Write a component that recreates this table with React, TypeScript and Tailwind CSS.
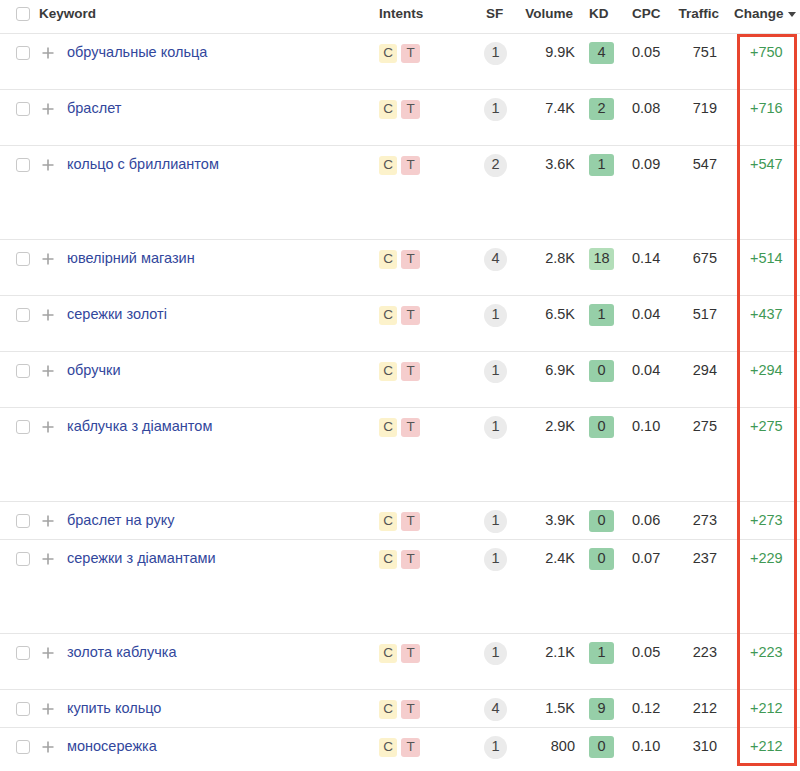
import React from "react";

type Row = {
  kw: string;
  sf: number;
  vol: string;
  kd: number;
  cpc: string;
  traffic: number;
  change: string;
  h: number;
};

const rows: Row[] = [
  { kw: "обручальные кольца", sf: 1, vol: "9.9K", kd: 4, cpc: "0.05", traffic: 751, change: "+750", h: 56 },
  { kw: "браслет", sf: 1, vol: "7.4K", kd: 2, cpc: "0.08", traffic: 719, change: "+716", h: 56 },
  { kw: "кольцо с бриллиантом", sf: 2, vol: "3.6K", kd: 1, cpc: "0.09", traffic: 547, change: "+547", h: 94 },
  { kw: "ювелірний магазин", sf: 4, vol: "2.8K", kd: 18, cpc: "0.14", traffic: 675, change: "+514", h: 56 },
  { kw: "сережки золоті", sf: 1, vol: "6.5K", kd: 1, cpc: "0.04", traffic: 517, change: "+437", h: 56 },
  { kw: "обручки", sf: 1, vol: "6.9K", kd: 0, cpc: "0.04", traffic: 294, change: "+294", h: 56 },
  { kw: "каблучка з діамантом", sf: 1, vol: "2.9K", kd: 0, cpc: "0.10", traffic: 275, change: "+275", h: 94 },
  { kw: "браслет на руку", sf: 1, vol: "3.9K", kd: 0, cpc: "0.06", traffic: 273, change: "+273", h: 38 },
  { kw: "сережки з діамантами", sf: 1, vol: "2.4K", kd: 0, cpc: "0.07", traffic: 237, change: "+229", h: 94 },
  { kw: "золота каблучка", sf: 1, vol: "2.1K", kd: 1, cpc: "0.05", traffic: 223, change: "+223", h: 56 },
  { kw: "купить кольцо", sf: 4, vol: "1.5K", kd: 9, cpc: "0.12", traffic: 212, change: "+212", h: 38 },
  { kw: "моносережка", sf: 1, vol: "800", kd: 0, cpc: "0.10", traffic: 310, change: "+212", h: 38 },
];

function Checkbox() {
  return <div className="w-[14px] h-[14px] shrink-0 rounded-[3px] border border-[#c9c9c9] bg-white" />;
}

function Plus() {
  return (
    <svg width="12" height="12" viewBox="0 0 12 12" className="shrink-0">
      <path d="M6 0.5V11.5M0.5 6H11.5" stroke="#a3a3a3" strokeWidth="1.6" />
    </svg>
  );
}

export default function App() {
  return (
    <div
      className="relative w-[800px] h-[771px] bg-white text-[#333] overflow-hidden"
      style={{ fontFamily: '"Liberation Sans", Arial, sans-serif' }}
    >
      {/* header */}
      <div className="flex items-start h-[33px] pt-[5px] text-[13.5px] font-bold text-[#3a3a3a] leading-[18px]">
        <div className="w-[379px] h-[18px] flex items-center pl-4">
          <Checkbox />
          <span className="ml-[9px]">Keyword</span>
        </div>
        <div className="w-[107px] h-[18px]">Intents</div>
        <div className="w-[21px] h-[18px]">SF</div>
        <div className="w-[66px] h-[18px] text-right">Volume</div>
        <div className="w-[59px] h-[18px] pl-[16px]">KD</div>
        <div className="w-[45px] h-[18px]">CPC</div>
        <div className="w-[42px] h-[18px] text-right">Traffic</div>
        <div className="flex-1 h-[18px] pl-[15px] flex items-center gap-[4px]">
          <span>Change</span>
          <svg width="8" height="5" viewBox="0 0 8 5">
            <path d="M0 0H8L4 5Z" fill="#444" />
          </svg>
        </div>
      </div>

      {/* rows */}
      {rows.map((r, i) => (
        <div
          key={i}
          className="flex items-start border-t border-[#e6e6e6] pt-[8px] text-[14.5px]"
          style={{ height: r.h }}
        >
          <div className="w-[379px] h-[22px] flex items-center pl-4">
            <Checkbox />
            <div className="ml-[12px]">
              <Plus />
            </div>
            <span className="ml-[13px] text-[#32479c]">{r.kw}</span>
          </div>
          <div className="w-[105px] h-[22px] flex items-center gap-[4px] text-[13.5px] text-[#555]">
            <span className="w-[18px] h-[19px] rounded-[3px] bg-[#fcf2cb] flex items-center justify-center">C</span>
            <span className="w-[19px] h-[19px] rounded-[3px] bg-[#f5cdcd] flex items-center justify-center">T</span>
          </div>
          <div className="w-[23px] h-[22px] flex items-center justify-center">
            <span className="w-[23px] h-[23px] rounded-full bg-[#ebebeb] text-[#444] flex items-center justify-center">
              {r.sf}
            </span>
          </div>
          <div className="w-[68px] h-[22px] flex items-center justify-end">{r.vol}</div>
          <div className="w-[57px] h-[22px] flex items-center pl-[14px]">
            <span
              className={
                "w-[25px] h-[22px] rounded-[3px] flex items-center justify-center text-[#333] " +
                (r.kd >= 10 ? "bg-[#b3deb9]" : "bg-[#96cfa8]")
              }
            >
              {r.kd}
            </span>
          </div>
          <div className="w-[44px] h-[22px] flex items-center">{r.cpc}</div>
          <div className="w-[41px] h-[22px] flex items-center justify-end">{r.traffic}</div>
          <div className="flex-1 h-[22px] flex items-center pl-[33px] text-[#3f9955]">{r.change}</div>
        </div>
      ))}

      {/* annotation box */}
      <div className="absolute left-[737px] top-[34px] w-[60px] h-[732px] border-[3px] border-[#e8452f]" />
    </div>
  );
}
